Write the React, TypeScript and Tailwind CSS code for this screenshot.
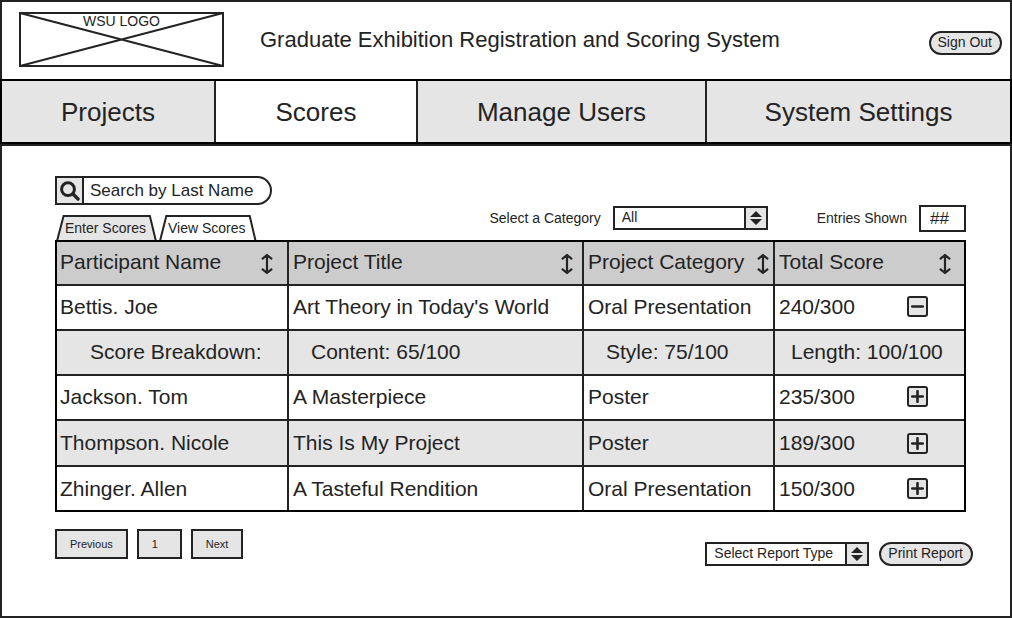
import type { ReactNode } from "react";

const navItems = [
  { label: "Projects", active: false, size: "flex-[212]" },
  { label: "Scores", active: true, size: "flex-[200]" },
  { label: "Manage Users", active: false, size: "flex-[287]" },
  { label: "System Settings", active: false, size: "flex-[303]" },
];

const columns = [
  { label: "Participant Name", pad: "pr-3.5" },
  { label: "Project Title", pad: "pr-[9px]" },
  { label: "Project Category", pad: "pr-1" },
  { label: "Total Score", pad: "pr-[13px]" },
];

type Entry = {
  name: string;
  title: string;
  category: string;
  score: string;
  row: string;
  breakdown?: { content: string; style: string; length: string };
};

const entries: Entry[] = [
  {
    name: "Bettis. Joe",
    title: "Art Theory in Today's World",
    category: "Oral Presentation",
    score: "240/300",
    row: "h-[45px] bg-white [&>td]:pb-0.5",
    breakdown: { content: "65/100", style: "75/100", length: "100/100" },
  },
  {
    name: "Jackson. Tom",
    title: "A Masterpiece",
    category: "Poster",
    score: "235/300",
    row: "h-[45px] bg-white [&>td]:pb-0.5",
  },
  {
    name: "Thompson. Nicole",
    title: "This Is My Project",
    category: "Poster",
    score: "189/300",
    row: "h-[46px] bg-[#e5e5e5]",
  },
  {
    name: "Zhinger. Allen",
    title: "A Tasteful Rendition",
    category: "Oral Presentation",
    score: "150/300",
    row: "h-[43px] bg-white",
  },
];

function SortIcon() {
  return (
    <svg width="12" height="22" viewBox="0 0 12 22" fill="none" stroke="currentColor" strokeWidth="2.2" strokeLinecap="round" strokeLinejoin="round" aria-hidden="true">
      <path d="M6 2v18M1.6 5.6 6 2l4.4 3.6M1.6 16.4 6 20l4.4-3.6" />
    </svg>
  );
}

function ToggleButton({ open, name }: { open: boolean; name: string }) {
  return (
    <button
      type="button"
      aria-expanded={open}
      aria-label={`Score breakdown for ${name}`}
      className="flex size-[21px] shrink-0 items-center justify-center rounded-[3px] border-2 border-[#232323] bg-[#e5e5e5]"
    >
      <svg width="13" height="13" viewBox="0 0 13 13" stroke="currentColor" strokeWidth="2.6" strokeLinecap="round" aria-hidden="true">
        <path d={open ? "M1.2 6.5h10.6" : "M1.2 6.5h10.6M6.5 1.2v10.6"} />
      </svg>
    </button>
  );
}

function SelectBox({ id, label, width, options }: { id: string; label?: string; width: string; options: string[] }) {
  return (
    <div className={`relative ${width}`}>
      <select
        id={id}
        aria-label={label}
        className="block h-6 w-full appearance-none border-2 border-[#232323] bg-white pr-6 pb-0.5 pl-[7px] text-[14px] leading-[18px] outline-none"
      >
        {options.map((option) => (
          <option key={option}>{option}</option>
        ))}
      </select>
      <span className="pointer-events-none absolute inset-y-0 right-0 flex w-6 items-center justify-center border-2 border-[#232323] bg-[#e5e5e5]">
        <svg width="12" height="14" viewBox="0 0 12 14" fill="currentColor" aria-hidden="true">
          <path d="M6 0l6 6H0zM0 8h12l-6 6z" />
        </svg>
      </span>
    </div>
  );
}

function ScoreTab({ selected, children }: { selected: boolean; children: ReactNode }) {
  return (
    <button type="button" role="tab" aria-selected={selected} className="relative h-[26px] pr-[11px] pl-[9px] text-[14px] leading-[26px]">
      <svg className="absolute inset-0 size-full" viewBox="0 0 100 26" preserveAspectRatio="none" aria-hidden="true">
        <path
          d="M1 26 7.5 1H93L99 26"
          fill={selected ? "#e5e5e5" : "#ffffff"}
          stroke="#232323"
          strokeWidth="2"
          vectorEffect="non-scaling-stroke"
        />
      </svg>
      <span className="relative">{children}</span>
    </button>
  );
}

function PageButton({ children }: { children: ReactNode }) {
  return (
    <button type="button" className="h-[30px] min-w-[45px] border-2 border-[#232323] bg-[#e5e5e5] px-[13px] text-left text-[11px]">
      {children}
    </button>
  );
}

function PillButton({ children }: { children: ReactNode }) {
  return (
    <button type="button" className="h-6 shrink-0 rounded-full border-2 border-[#232323] bg-[#e5e5e5] pr-2 pb-0.5 pl-[7px] text-[14px] leading-[18px] whitespace-nowrap">
      {children}
    </button>
  );
}

const cell = "border-r-2 border-b-2 border-[#232323] pl-1 first:pl-[3px] last:border-r-0";

export default function App() {
  return (
    <div className="flex min-h-screen flex-col border-2 border-[#232323] bg-white font-['Liberation_Sans',Arial,sans-serif] text-[#232323]">
      <header className="flex items-center pt-2.5 pr-2 pl-[17px]">
        <div className="relative mb-3 flex h-[55px] w-[205px] shrink-0 justify-center">
          <svg className="absolute inset-0 size-full" viewBox="0 0 205 55" fill="none" stroke="currentColor" strokeWidth="2" aria-hidden="true">
            <path d="M1 1h203v53H1zM1 1l203 53M204 1 1 54" />
          </svg>
          <span className="relative text-[14px] leading-[18px]">WSU LOGO</span>
        </div>
        <h1 className="mb-3 ml-9 flex-1 text-[22px] leading-7">Graduate Exhibition Registration and Scoring System</h1>
        <div className="mb-6 flex self-end">
          <PillButton>Sign Out</PillButton>
        </div>
      </header>

      <nav className="-mx-0.5 flex border-2 border-black">
        {navItems.map((item) => (
          <a
            key={item.label}
            href="#"
            aria-current={item.active ? "page" : undefined}
            className={`${item.size} border-r-2 border-[#232323] pt-[15px] pb-[13px] text-center text-[26px] leading-[33px] whitespace-nowrap last:border-r-0 ${item.active ? "bg-white" : "bg-[#e5e5e5]"}`}
          >
            {item.label}
          </a>
        ))}
      </nav>

      <main className="flex-1 border-t-2 border-[#232323] pt-[30px] pl-[53px]">
        <div className="mr-11 flex items-end justify-between">
          <div>
            <form role="search" className="flex h-[29px] w-[217px] overflow-hidden rounded-l-[4px] rounded-r-full border-2 border-[#232323]">
              <button type="submit" aria-label="Search" className="flex w-[27px] shrink-0 items-center justify-center border-r-2 border-[#232323] bg-[#e5e5e5]">
                <svg width="20" height="20" viewBox="0 0 20 20" fill="none" stroke="currentColor" aria-hidden="true">
                  <circle cx="8" cy="8.2" r="6.4" strokeWidth="3" />
                  <path d="m13 13 5 5" strokeWidth="3.4" strokeLinecap="round" />
                </svg>
              </button>
              <input
                type="text"
                aria-label="Search by Last Name"
                placeholder="Search by Last Name"
                className="min-w-0 flex-1 pl-1.5 text-[17px] outline-none placeholder:text-[#232323]"
              />
            </form>
            <div role="tablist" className="mt-2.5 -mb-px flex gap-0.5 pl-px">
              <ScoreTab selected>Enter Scores</ScoreTab>
              <ScoreTab selected={false}>View Scores</ScoreTab>
            </div>
          </div>
          <div className="flex items-center pb-2 text-[14px]">
            <label htmlFor="category" className="mr-3">Select a Category</label>
            <div className="pb-0.5">
              <SelectBox id="category" width="w-[155px]" options={["All", "Oral Presentation", "Poster"]} />
            </div>
            <label htmlFor="shown" className="mr-3 ml-[49px]">Entries Shown</label>
            <input id="shown" type="text" placeholder="##" className="h-[27px] w-[47px] border-2 border-[#232323] pl-[9px] text-[17px] outline-none placeholder:text-[#232323]" />
          </div>
        </div>

        <div className="mr-11">
          <table className="relative w-full table-fixed border-separate border-spacing-0 border-2 border-black text-left text-[21px] leading-7 whitespace-nowrap">
            <colgroup>
              <col className="w-[25.58%]" />
              <col className="w-[32.52%]" />
              <col className="w-[21.06%]" />
              <col />
            </colgroup>
            <thead>
              <tr className="h-11 bg-[#cccccc]">
                {columns.map((column) => (
                  <th key={column.label} className={`${cell} ${column.pad} font-normal`}>
                    <div className="flex items-center justify-between">
                      <span className="pb-0.5">{column.label}</span>
                      <button type="button" aria-label={`Sort by ${column.label}`} className="pt-0.5">
                        <SortIcon />
                      </button>
                    </div>
                  </th>
                ))}
              </tr>
            </thead>
            {entries.map((entry) => (
              <tbody key={entry.name} className="last:[&_td]:border-b-0">
                <tr className={entry.row}>
                  <td className={cell}>{entry.name}</td>
                  <td className={cell}>{entry.title}</td>
                  <td className={cell}>{entry.category}</td>
                  <td className={cell}>
                    <div className="flex items-center justify-between pr-9">
                      {entry.score}
                      <ToggleButton open={!!entry.breakdown} name={entry.name} />
                    </div>
                  </td>
                </tr>
                {entry.breakdown && (
                  <tr className="h-[45px] bg-[#e5e5e5]">
                    <td className="border-r-2 border-b-2 border-[#232323] pb-0.5 pl-[33px]">Score Breakdown:</td>
                    <td className="border-r-2 border-b-2 border-[#232323] pb-0.5 pl-[22px]">Content: {entry.breakdown.content}</td>
                    <td className="border-r-2 border-b-2 border-[#232323] pb-0.5 pl-[22px]">Style: {entry.breakdown.style}</td>
                    <td className="border-b-2 border-[#232323] pb-0.5 pl-4">Length: {entry.breakdown.length}</td>
                  </tr>
                )}
              </tbody>
            ))}
          </table>
        </div>

        <div className="mt-[17px] mr-[37px] flex items-start justify-between">
          <div className="flex gap-[9px]">
            <PageButton>Previous</PageButton>
            <PageButton>1</PageButton>
            <PageButton>Next</PageButton>
          </div>
          <div className="mt-[13px] flex gap-2.5">
            <SelectBox id="report" label="Report type" width="w-[164px]" options={["Select Report Type"]} />
            <PillButton>Print Report</PillButton>
          </div>
        </div>
      </main>
    </div>
  );
}
